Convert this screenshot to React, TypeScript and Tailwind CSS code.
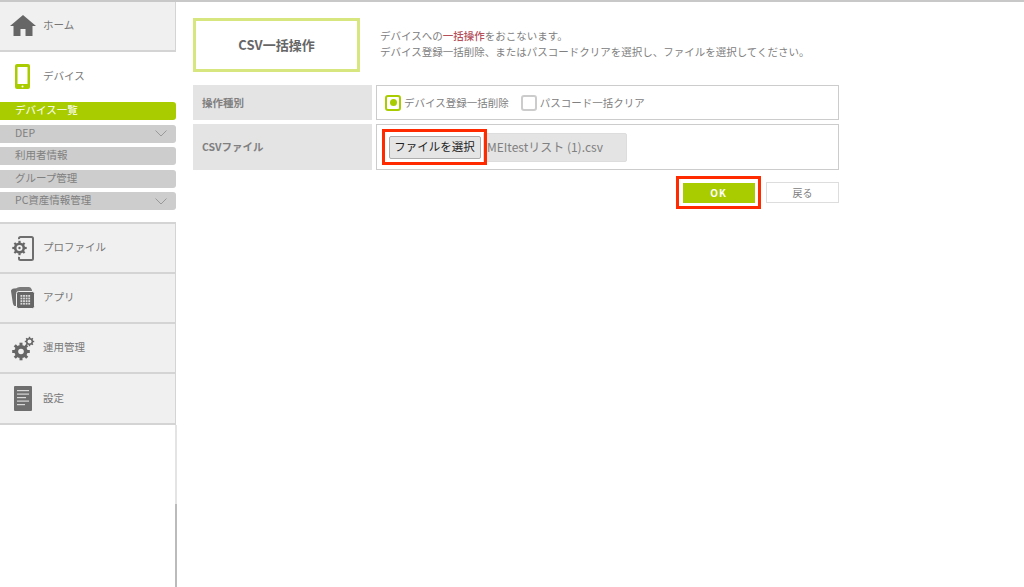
import React from "react";

function Home() {
  return (
    <svg width="26" height="22" viewBox="0 0 26 22">
      <path d="M13 0 L26 11 L22.5 11 L22.5 21 L15.5 21 L15.5 14 L10.5 14 L10.5 21 L3.5 21 L3.5 11 L0 11 Z" fill="#666" />
    </svg>
  );
}
function Phone() {
  return (
    <svg width="16" height="25" viewBox="0 0 16 25">
      <rect x="0" y="0" width="15" height="25" rx="2" fill="#a9cc00" />
      <rect x="2.5" y="3" width="10" height="17" fill="#fff" />
      <circle cx="7.5" cy="22.4" r="1" fill="#fff" />
    </svg>
  );
}
function GearShape({ cx, cy, r, hole, teeth, tw, tl }: { cx: number; cy: number; r: number; hole: number; teeth: number; tw: number; tl: number }) {
  return (
    <g>
      {Array.from({ length: teeth }).map((_, i) => (
        <rect
          key={i}
          x={cx - tw / 2}
          y={cy - r - tl}
          width={tw}
          height={tl + 1}
          fill="#666"
          transform={`rotate(${(360 / teeth) * i} ${cx} ${cy})`}
        />
      ))}
      <circle cx={cx} cy={cy} r={r} fill="#666" />
      <circle cx={cx} cy={cy} r={hole} fill="#f0f0f0" />
    </g>
  );
}
function Profile() {
  return (
    <svg width="22" height="25" viewBox="0 0 22 25">
      <rect x="7" y="1" width="14" height="23" rx="1.5" fill="none" stroke="#6e6e6e" strokeWidth="2" />
      <circle cx="14" cy="22" r="0.8" fill="#f0f0f0" />
      <circle cx="7.5" cy="12" r="9" fill="#f0f0f0" />
      <GearShape cx={7.5} cy={12} r={5.6} hole={3} teeth={8} tw={2.2} tl={1.6} />
      <circle cx="7.5" cy="12" r="1.2" fill="#666" />
    </svg>
  );
}
function AppsIcon() {
  return (
    <svg width="24" height="22" viewBox="0 0 24 22">
      <path d="M0 4 Q0 2 3 1.5 L11 1 L11 19 L4 19 Q2 19 1.5 14 Z" fill="#6e6e6e" />
      <path d="M5 2 Q6 0 9 0 L18 0 Q20 0 21 3 L21 5 L5 5 Z" fill="#7a7a7a" />
      <rect x="5.5" y="4.5" width="18" height="17" rx="2" fill="#666" stroke="#f0f0f0" strokeWidth="1" />
      <g fill="#ddd">
        {[0, 1, 2, 3].map((r) =>
          [0, 1, 2, 3].map((c) => <rect key={`${r}${c}`} x={9.5 + c * 2.6} y={8 + r * 2.6} width="1.8" height="1.8" />)
        )}
      </g>
    </svg>
  );
}
function Gears() {
  return (
    <svg width="23" height="25" viewBox="0 0 23 25">
      <GearShape cx={9} cy={15.5} r={6.6} hole={2.8} teeth={8} tw={3} tl={2.2} />
      <GearShape cx={17.5} cy={5.5} r={3.6} hole={2} teeth={8} tw={1.5} tl={1.1} />
    </svg>
  );
}
function Doc() {
  return (
    <svg width="18" height="25" viewBox="0 0 18 25">
      <rect width="18" height="25" rx="1" fill="#6e6e6e" />
      <g fill="#d8d8d8">
        <rect x="3" y="4" width="12" height="1.2" />
        <rect x="3" y="7.5" width="12" height="1.2" />
        <rect x="3" y="11" width="9" height="1.2" />
        <rect x="3" y="14.5" width="12" height="1.2" />
        <rect x="3" y="18" width="8" height="1.2" />
      </g>
    </svg>
  );
}
function Chevron() {
  return (
    <svg width="12" height="7" viewBox="0 0 12 7" className="mr-[9px]">
      <path d="M0.5 0.5 L6 6 L11.5 0.5" fill="none" stroke="#999" strokeWidth="1" />
    </svg>
  );
}

function NavItem({ icon, label, className }: { icon: React.ReactNode; label: string; className: string }) {
  return (
    <div className={`flex items-center border-r border-b-2 border-[#d4d4d4] bg-[#f0f0f0] ${className}`}>
      <div className="flex w-[43px] shrink-0 justify-center pl-[3px]">{icon}</div>
      <span className="pb-[2px] text-[10.5px] text-[#777]">{label}</span>
    </div>
  );
}

function SubItem({ label, chevron, active }: { label: string; chevron?: boolean; active?: boolean }) {
  return (
    <div
      className={`flex h-[18px] items-center justify-between rounded-r-[3px] pl-[15px] text-[10.5px] leading-none ${
        active ? "bg-[#a9cc00] text-white" : "bg-[#cdcdcd] text-[#808080]"
      }`}
    >
      <span className="pb-[1px]">{label}</span>
      {chevron && <Chevron />}
    </div>
  );
}

export default function App() {
  return (
    <div
      className="flex h-[587px] w-[1024px] flex-col overflow-hidden bg-white"
      style={{ fontFamily: '"Noto Sans CJK JP", "Open Sans", sans-serif' }}
    >
      <div className="h-[2px] shrink-0 bg-[#c8c8c8]" />
      <div className="flex min-h-0 flex-1">
        <aside className="flex w-[177px] shrink-0 flex-col">
          <div className="flex w-[176px] flex-col">
            <NavItem icon={<Home />} label="ホーム" className="h-[50px]" />
            <div className="flex h-[50px] items-center pb-[3px]">
              <div className="flex w-[43px] shrink-0 justify-center pl-[3px] pt-[1px]">
                <Phone />
              </div>
              <span className="text-[10.5px] text-[#777]">デバイス</span>
            </div>
            <div className="flex flex-col gap-[4.5px]">
              <SubItem label="デバイス一覧" active />
              <SubItem label="DEP" chevron />
              <SubItem label="利用者情報" />
              <SubItem label="グループ管理" />
              <SubItem label="PC資産情報管理" chevron />
            </div>
            <div className="mt-[12px] border-t-2 border-[#d4d4d4]">
              <NavItem icon={<Profile />} label="プロファイル" className="h-[50px]" />
              <NavItem icon={<AppsIcon />} label="アプリ" className="h-[50px]" />
              <NavItem icon={<Gears />} label="運用管理" className="h-[50px]" />
              <NavItem icon={<Doc />} label="設定" className="h-[51px]" />
            </div>
          </div>
          <div className="flex min-h-0 flex-1 justify-end">
            <div className="flex w-[2px] flex-col">
              <div className="flex-1 bg-[#e4e4e4]" />
              <div className="h-[83px] bg-[#bbbbbb]" />
            </div>
          </div>
        </aside>

        <main className="flex-1 pl-[16px]">
          <div className="mt-[16px] flex">
            <div className="flex h-[54px] w-[167px] items-center justify-center border-[3px] border-[#d8e67f] text-[13px] font-bold text-[#666]">
              CSV一括操作
            </div>
            <div className="ml-[20px] pt-[10px] text-[10.5px] leading-[16px] text-[#808080]">
              <p>
                デバイスへの<span className="font-medium text-[#b5505a]">一括操作</span>をおこないます。
              </p>
              <p>デバイス登録一括削除、またはパスコードクリアを選択し、ファイルを選択してください。</p>
            </div>
          </div>

          <div className="mt-[13px] flex w-[646px] flex-col gap-[4px]">
            <div className="flex h-[35px] gap-[4px]">
              <div className="flex w-[179px] items-center bg-[#e4e4e4] pl-[9px] text-[10.5px] font-bold text-[#808080]">
                操作種別
              </div>
              <div className="flex flex-1 items-center border border-[#ccc] pl-[8px] text-[10.5px] text-[#808080]">
                <span className="flex h-[16px] w-[16px] items-center justify-center rounded-[3px] border-2 border-[#a9cc00]">
                  <span className="h-[7px] w-[7px] rounded-full bg-[#a9cc00]" />
                </span>
                <span className="ml-[3px]">デバイス登録一括削除</span>
                <span className="ml-[12px] h-[16px] w-[16px] rounded-[3px] border-2 border-[#ccc]" />
                <span className="ml-[3px]">パスコード一括クリア</span>
              </div>
            </div>
            <div className="flex h-[46px] gap-[4px]">
              <div className="flex w-[179px] items-center bg-[#e4e4e4] pl-[9px] text-[10.5px] font-bold text-[#808080]">
                CSVファイル
              </div>
              <div className="flex flex-1 items-center border border-[#ccc] pl-[5px]">
                <div className="relative z-10 box-border flex h-[36px] w-[105px] items-center justify-center border-[3px] border-[#ff2a00]">
                  <div className="flex h-[23px] w-[92px] items-center justify-center rounded-[2px] border border-[#adadad] bg-[#e5e5e5] text-[11.5px] text-[#222]">
                    ファイルを選択
                  </div>
                </div>
                <div className="-ml-[4px] flex h-[29px] w-[144px] items-center rounded-r-[2px] border border-[#ddd] bg-[#e4e4e4] pl-[3px] text-[12px] text-[#808080]">
                  MEItestリスト (1).csv
                </div>
              </div>
            </div>
          </div>

          <div className="mt-[6px] flex w-[646px] items-center justify-end">
            <div className="flex h-[33px] w-[85px] items-center justify-center border-[3px] border-[#ff2a00]">
              <div className="flex h-[20px] w-[72px] items-center justify-center bg-[#a9cc00] text-[10px] font-bold tracking-[1px] text-white">
                OK
              </div>
            </div>
            <div className="ml-[5px] flex h-[21px] w-[73px] items-center justify-center border border-[#ddd] text-[10px] text-[#808080]">
              戻る
            </div>
          </div>
        </main>
      </div>
    </div>
  );
}
